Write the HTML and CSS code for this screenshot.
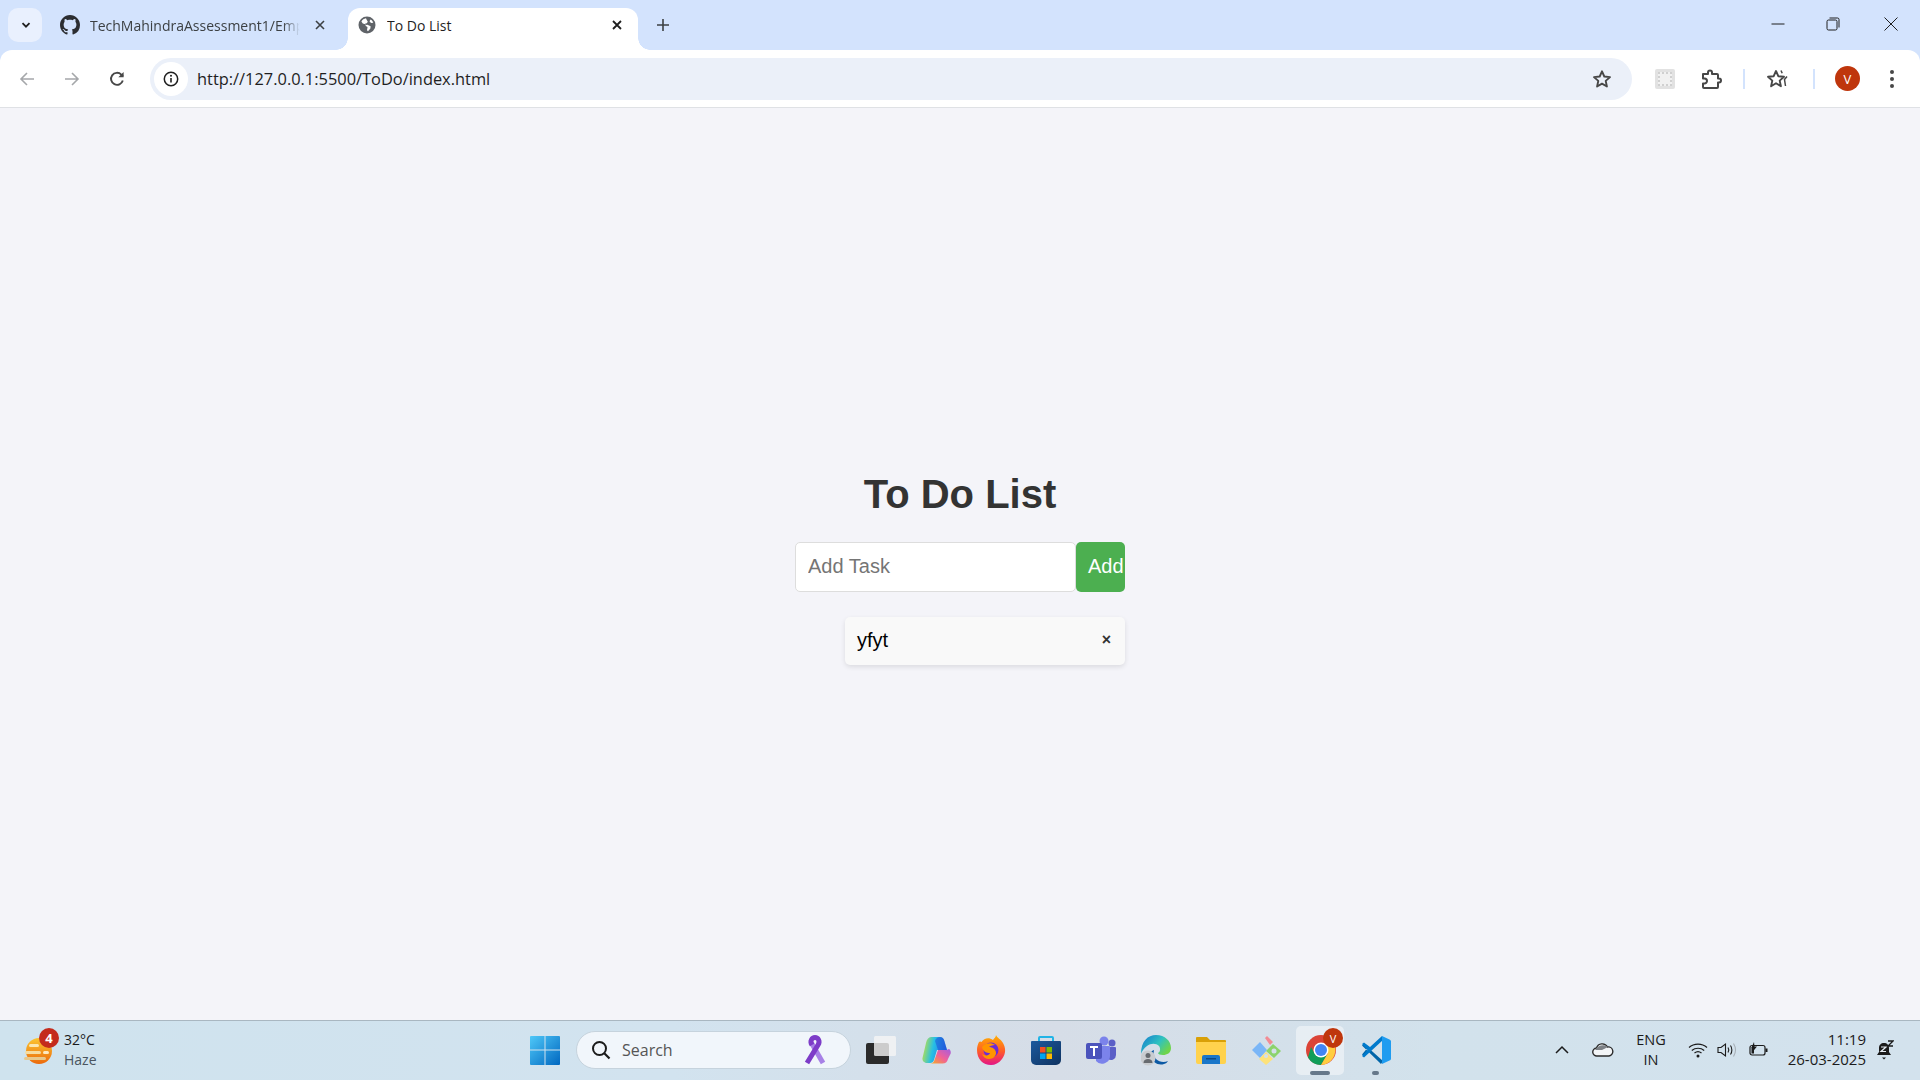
FILE: index.html
```html
<!DOCTYPE html>
<html lang="en">
<head>
<meta charset="utf-8">
<title>To Do List</title>
<link rel="stylesheet" href="styles.css">
</head>
<body>
<header class="browser">
  <div class="tabstrip">
    <div class="tab-menu">
      <svg width="12" height="12" viewBox="0 0 12 12"><path d="M2.5 4.2 6 7.7l3.5-3.5" fill="none" stroke="#1f1f1f" stroke-width="1.8"/></svg>
    </div>
    <div class="tab tab-idle">
      <svg class="fav-gh" width="20" height="20" viewBox="0 0 16 16"><path fill="#2b2d31" d="M8 0C3.58 0 0 3.58 0 8c0 3.54 2.29 6.53 5.47 7.59.4.07.55-.17.55-.38 0-.19-.01-.82-.01-1.49-2.01.37-2.53-.49-2.69-.94-.09-.23-.48-.94-.82-1.13-.28-.15-.68-.52-.01-.53.63-.01 1.08.58 1.23.82.72 1.21 1.87.87 2.33.66.07-.52.28-.87.51-1.07-1.78-.2-3.64-.89-3.64-3.95 0-.87.31-1.59.82-2.15-.08-.2-.36-1.02.08-2.12 0 0 .67-.21 2.2.82.64-.18 1.32-.27 2-.27s1.36.09 2 .27c1.53-1.04 2.2-.82 2.2-.82.44 1.1.16 1.92.08 2.12.51.56.82 1.27.82 2.15 0 3.07-1.87 3.75-3.65 3.95.29.25.54.73.54 1.48 0 1.07-.01 1.93-.01 2.2 0 .21.15.46.55.38A8.01 8.01 0 0 0 16 8c0-4.42-3.58-8-8-8z"/></svg>
      <span class="tab-title tab-title-fade">TechMahindraAssessment1/Emp</span>
      <svg class="tab-x" width="12" height="12" viewBox="0 0 12 12"><path d="M2 2l8 8M10 2l-8 8" stroke="#3c4043" stroke-width="1.6"/></svg>
    </div>
    <div class="tab tab-active">
      <svg class="fav-globe" width="18" height="18" viewBox="0 0 18 18"><circle cx="9" cy="9" r="8.5" fill="#5f6368"/><path fill="#fff" d="M8 2.2c-2 .3-3.6 1.500-4.600 3.200l1.400 2 2.600.8.300 1.800 1.800 1-.500 3.300 1 .900 2.400-2.600.200-2.300-3.200-1.500-1.500.200-.700-1.400 1.600-.300 1-1.500-1.300-2.300zM12.500 3.500l-1 1.800 1.500 1.700 2.300-.300c-.500-1.400-1.500-2.500-2.800-3.200z"/></svg>
      <span class="tab-title tab-title-on">To Do List</span>
      <svg class="tab-x" width="12" height="12" viewBox="0 0 12 12"><path d="M2 2l8 8M10 2l-8 8" stroke="#1f1f1f" stroke-width="1.8"/></svg>
    </div>
    <svg class="newtab" width="14" height="14" viewBox="0 0 14 14"><path d="M7 1v12M1 7h12" stroke="#3c4043" stroke-width="1.6"/></svg>
    <div class="winctl">
      <svg width="14" height="14" viewBox="0 0 14 14"><path d="M0.500 7h13" stroke="#1f1f1f" stroke-width="1"/></svg>
      <svg width="14" height="14" viewBox="0 0 14 14"><rect x="1" y="3" width="10" height="10" rx="1.500" fill="none" stroke="#1f1f1f"/><path d="M3.500 1h8a1.500 1.500 0 0 1 1.500 1.500v8" fill="none" stroke="#1f1f1f" stroke-width="1"/></svg>
      <svg width="14" height="14" viewBox="0 0 14 14"><path d="M.5.5l13 13M13.500.5l-13 13" stroke="#1f1f1f" stroke-width="1"/></svg>
    </div>
  </div>
  <div class="toolbar">
    <svg class="nav nav-back" width="16" height="16" viewBox="0 0 16 16"><path d="M15 8H2M8 2 2 8l6 6" fill="none" stroke="#a5a7aa" stroke-width="1.600"/></svg>
    <svg class="nav nav-fwd" width="16" height="16" viewBox="0 0 16 16"><path d="M1 8h13M8 2l6 6-6 6" fill="none" stroke="#a5a7aa" stroke-width="1.600"/></svg>
    <svg class="nav nav-reload" width="16" height="16" viewBox="0 0 16 16"><path d="M13.800 9.500A6 6 0 1 1 12.300 3.600L14 5.300" fill="none" stroke="#474747" stroke-width="1.900"/><path d="M14.600 1v5.300H9.300z" fill="#474747"/></svg>
    <div class="omnibox">
      <div class="site-info">
        <svg width="16" height="16" viewBox="0 0 16 16"><circle cx="8" cy="8" r="6.700" fill="none" stroke="#1f1f1f" stroke-width="1.500"/><path d="M8 7v4.500" stroke="#1f1f1f" stroke-width="1.600"/><circle cx="8" cy="4.800" r="1" fill="#1f1f1f"/></svg>
      </div>
      <span class="url">http://127.0.0.1:5500/ToDo/index.html</span>
      <svg class="omni-star" width="20" height="20" viewBox="0 0 20 20"><path d="M10 2.300l2.300 5.200 5.700.6-4.300 3.800 1.200 5.600-4.900-2.900-4.900 2.900 1.200-5.600L2 8.100l5.700-.6z" fill="none" stroke="#474747" stroke-width="1.900" stroke-linejoin="round"/></svg>
    </div>
    <div class="ext-thumb"><span></span></div>
    <svg class="puzzle" width="22" height="22" viewBox="0 0 22 22"><path d="M3 6h5V4.500a2 2 0 0 1 4 0V6h5a1 1 0 0 1 1 1v3.500h1a2 2 0 0 1 0 4h-1V19a1 1 0 0 1-1 1H4a1 1 0 0 1-1-1v-3.500h1.500a2.500 2.500 0 0 0 0-5H3z" fill="none" stroke="#474747" stroke-width="2" stroke-linejoin="round"/></svg>
    <i class="tool-sep sep-a"></i>
    <svg class="star-list" width="24" height="22" viewBox="0 0 24 22"><path d="M10 3l2.300 5.200 5.700.6-4.300 3.800 1.200 5.600-4.900-2.900-4.900 2.900L6.300 12.600 2 8.800l5.700-.6z" fill="none" stroke="#474747" stroke-width="1.900" stroke-linejoin="round"/><path d="M15 2.500l1.200 2.800M21 8.500l-2.500 3 1 6.500" fill="none" stroke="#474747" stroke-width="1.500"/></svg>
    <i class="tool-sep sep-b"></i>
    <div class="avatar">V</div>
    <svg class="kebab" width="6" height="20" viewBox="0 0 6 20"><circle cx="3" cy="3" r="2" fill="#474747"/><circle cx="3" cy="10" r="2" fill="#474747"/><circle cx="3" cy="17" r="2" fill="#474747"/></svg>
  </div>
</header>

<main class="page">
  <section class="todo">
    <h1 class="todo-title">To Do List</h1>
    <div class="todo-form">
      <input class="todo-input" type="text" placeholder="Add Task">
      <button class="todo-add" type="button">Add</button>
    </div>
    <ul class="todo-list">
      <li class="todo-item"><span>yfyt</span><button class="todo-del" type="button">×</button></li>
    </ul>
  </section>
</main>

<footer class="taskbar">
  <div class="weather">
    <svg class="weather-icon" width="30" height="30" viewBox="0 0 30 30">
      <defs><linearGradient id="sun" x1="0" y1="0" x2="0" y2="1"><stop offset="0" stop-color="#fbc531"/><stop offset="1" stop-color="#ec6a0c"/></linearGradient></defs>
      <circle cx="15" cy="15" r="13" fill="url(#sun)"/>
      <rect x="5" y="8" width="10" height="3" rx="1.500" fill="#fbe7b0"/>
      <rect x="1" y="15" width="16" height="3" rx="1.500" fill="#f6dca0"/>
      <rect x="19" y="15" width="6" height="3" rx="1.500" fill="#fde9c0"/>
      <rect x="0" y="21" width="22" height="3" rx="1.500" fill="#e8c88c"/>
    </svg>
    <span class="weather-badge">4</span>
    <div class="weather-text"><span class="temp">32°C</span><span class="cond">Haze</span></div>
  </div>
  <div class="tb-center">
    <svg class="start" width="30" height="30" viewBox="0 0 30 30">
      <defs><linearGradient id="win" x1="0" y1="0" x2="1" y2="1"><stop offset="0" stop-color="#4fc8f8"/><stop offset="1" stop-color="#0067c0"/></linearGradient></defs>
      <path fill="url(#win)" d="M1 1h13.500v13.500H0V2a1 1 0 0 1 1-1zM15.500 1H29a1 1 0 0 1 1 1v12.500H15.500zM0 15.500h14.500V30H1a1 1 0 0 1-1-1zM15.500 15.500H30V29a1 1 0 0 1-1 1H15.500z"/>
    </svg>
    <div class="searchbox">
      <svg width="20" height="20" viewBox="0 0 20 20"><circle cx="8.500" cy="8.500" r="6.500" fill="none" stroke="#1b1b1b" stroke-width="2"/><path d="M13.300 13.300 18.500 18.500" stroke="#1b1b1b" stroke-width="2.200"/></svg>
      <span class="search-label">Search</span>
      <svg class="ribbon" width="22" height="30" viewBox="0 0 22 30"><path d="M7.500 8 19 28" fill="none" stroke="#a781e6" stroke-width="5"/><path d="M3 28 14 10C16.500 6 14 2.500 11 2.500S5.500 6 8 10" fill="none" stroke="#7d3cc8" stroke-width="5"/></svg>
    </div>
    <div class="slot slot-view">
      <svg width="30" height="30" viewBox="0 0 30 30"><rect x="0" y="8" width="23" height="21" rx="2" fill="#2b2b2b"/><rect x="8" y="1" width="22" height="20" rx="1.500" fill="#f5f5f5" fill-opacity=".8"/></svg>
    </div>
    <div class="slot">
      <svg width="30" height="28" viewBox="0 0 30 28">
        <defs><linearGradient id="cpA" x1="0" y1="0.500" x2="1" y2="0.700"><stop offset="0" stop-color="#b4e04e"/><stop offset=".4" stop-color="#27bfe6"/><stop offset="1" stop-color="#2466e0"/></linearGradient><linearGradient id="cpB" x1="0" y1="1" x2="1" y2="0"><stop offset="0" stop-color="#f6b020"/><stop offset=".5" stop-color="#f0609a"/><stop offset="1" stop-color="#a35de0"/></linearGradient></defs>
        <path fill="url(#cpA)" d="M10 1h9c2.500 0 3.500 1.200 4.200 3.500L26 14H16l-3 10c-.6 2-2 3-4 3H6c-3 0-5-2.500-4.500-5L5 7c.8-3.500 2.500-6 5-6z"/>
        <path fill="url(#cpB)" d="M17 14h8.500l2.500-1c1.500 1 2 2.500 1.700 4.500L27 23c-.8 3-2.500 4.500-5.500 4.500H9c2.300 0 3.700-1.200 4.300-3z"/>
        <path fill="#1d3fd8" d="M19 1c2.500 0 3.500 1.200 4.200 3.500L26 14h-9l-3-9c1-2.500 2.500-4 5-4z" fill-opacity=".45"/>
      </svg>
    </div>
    <div class="slot">
      <svg width="30" height="30" viewBox="0 0 30 30">
        <defs><linearGradient id="ff" x1="0.500" y1="0" x2="0.500" y2="1"><stop offset="0" stop-color="#ffb000"/><stop offset=".55" stop-color="#ff5a2a"/><stop offset="1" stop-color="#e31587"/></linearGradient></defs>
        <path fill="url(#ff)" d="M20 0c1 3 5 4 7 8 3 5 3 11-1 16-3 4-7 6-11 6C7 30 1 24 1 15c0-3 .8-6 2-8 1-1 2-.5 2.500 0C8 3 13 2 17 5c1-1.500 3-3 3-5z"/>
        <circle cx="15" cy="15" r="7.500" fill="#6a2bd9"/>
        <path fill="#ff9500" d="M6 12c3-4 9-5 13-2-3 0-5 1-6 2 3 0 7 2 7 6 0 3-3 6-7 6-3 0-6-2-7-5 3 2 7 2 8-1-3 0-7-1-8-6z"/>
      </svg>
    </div>
    <div class="slot">
      <svg width="30" height="30" viewBox="0 0 30 30">
        <defs><linearGradient id="st" x1="0" y1="0" x2="1" y2="1"><stop offset="0" stop-color="#1c5a9e"/><stop offset="1" stop-color="#0f3260"/></linearGradient></defs>
        <path d="M8 7V3a1 1 0 0 1 1-1h12a1 1 0 0 1 1 1v4" fill="none" stroke="#22b4e6" stroke-width="2"/>
        <path fill="url(#st)" d="M1 6h28a1 1 0 0 1 1 1v18a5 5 0 0 1-5 5H5a5 5 0 0 1-5-5V7a1 1 0 0 1 1-1z"/>
        <rect x="9" y="12" width="5.500" height="5.500" fill="#f25022"/><rect x="15.500" y="12" width="5.500" height="5.500" fill="#7fba00"/><rect x="9" y="18.500" width="5.500" height="5.500" fill="#00a4ef"/><rect x="15.500" y="18.500" width="5.500" height="5.500" fill="#ffb900"/>
      </svg>
    </div>
    <div class="slot">
      <svg width="30" height="28" viewBox="0 0 30 28">
        <circle cx="18" cy="5" r="4.500" fill="#7b83eb"/><circle cx="26" cy="7" r="3.500" fill="#5b5fc7"/>
        <path fill="#5b5fc7" d="M22 11h7a1 1 0 0 1 1 1v7a5 5 0 0 1-8 4z"/>
        <path fill="#7b83eb" d="M10 10h13a1 1 0 0 1 1 1v9a8 8 0 0 1-14 5z"/>
        <rect x="0" y="7" width="16" height="16" rx="2" fill="#4b53bc"/>
        <path d="M4 11h8M8 11v9" stroke="#fff" stroke-width="2"/>
      </svg>
    </div>
    <div class="slot">
      <svg width="30" height="31" viewBox="0 0 30 31">
        <defs><linearGradient id="edg" x1="0" y1="0" x2="1" y2="0.600"><stop offset="0" stop-color="#1378d0"/><stop offset=".6" stop-color="#30c2c0"/><stop offset="1" stop-color="#6fd44a"/></linearGradient></defs>
        <path fill="url(#edg)" d="M15 0c9 0 15 6 15 13 0 5-4 7-8 7-3 0-5-1-5-2 2-1 3-4 1-7-3-3-8-3-12 0-3 2-5 5-6 8C0 6 7 0 15 0z"/>
        <path fill="#0c59a4" d="M9 22c3 5 8 9 14 7 2-.5 3-1.500 4-3-4 2-9 1-12-2-2-2-3-6-2-9-3 1-5 4-4 7z"/>
        <circle cx="7" cy="23" r="7.500" fill="#c9ccd0"/><circle cx="7" cy="20.500" r="2.500" fill="#676b70"/><path d="M2.500 28c0-3 2-4 4.500-4s4.500 1 4.500 4z" fill="#676b70"/>
      </svg>
    </div>
    <div class="slot">
      <svg width="30" height="27" viewBox="0 0 30 27">
        <path fill="#d9a007" d="M1 0h10l3 3h15a1 1 0 0 1 1 1v6H0V1a1 1 0 0 1 1-1z"/>
        <path fill="#ffd24d" d="M0 5h30v20a2 2 0 0 1-2 2H2a2 2 0 0 1-2-2z"/>
        <path fill="#1976c9" d="M6 27v-7a2 2 0 0 1 2-2h14a2 2 0 0 1 2 2v7z"/>
        <rect x="10" y="21" width="10" height="1.500" fill="#0c4a86"/>
      </svg>
    </div>
    <div class="slot">
      <svg width="30" height="30" viewBox="0 0 30 30">
        <path fill="#7ab6f7" d="M9 7l7 8-7 8-8-8z"/>
        <path fill="#f28b94" d="M14 3l2-2 6 6-3 3z"/>
        <path fill="#8cd36b" d="M22 9l8 7-7 7-8-7z"/><circle cx="23" cy="16" r="2.500" fill="#d3e0ea"/>
        <path fill="#fde27a" d="M15 17l7 7-7 6-7-6z"/><circle cx="15" cy="21" r="2" fill="#d3e0ea"/>
      </svg>
    </div>
    <div class="slot slot-on">
      <svg width="30" height="30" viewBox="0 0 30 30">
        <circle cx="15" cy="15" r="15" fill="#db4437"/>
        <path fill="#0f9d58" d="M2 22.500A15 15 0 0 0 15 30l6-10-6 1-6-2-4-7-3 10.500z"/>
        <path fill="#ffcd40" d="M15 9h13.100A15 15 0 0 1 15 30l7-12V15a7 7 0 0 0-7-6z"/>
        <circle cx="15" cy="15" r="7.500" fill="#fff"/><circle cx="15" cy="15" r="6" fill="#4285f4"/>
      </svg>
      <span class="chrome-badge">V</span>
      <i class="run-pill"></i>
    </div>
    <div class="slot slot-code">
      <svg width="30" height="30" viewBox="0 0 30 30">
        <path fill="#0065a9" d="M1 10.500 3 9l19 17-2 3zM1 19.500 3 21l6-5-3-2.500z"/>
        <path fill="#007acc" d="M21 1 9 12 3 7.500 1 9l5.500 6L1 21l2 1.500L22 5z"/>
        <path fill="#1f9cf0" d="M21 1l7.500 3.500A2 2 0 0 1 30 6.300v17.400a2 2 0 0 1-1.500 1.800L21 29z"/>
      </svg>
      <i class="run-dot"></i>
    </div>
  </div>
  <div class="tray">
    <svg class="tray-chev" width="14" height="10" viewBox="0 0 14 10"><path d="M1 8l6-6 6 6" fill="none" stroke="#1b1b1b" stroke-width="1.500"/></svg>
    <svg class="tray-cloud" width="22" height="14" viewBox="0 0 22 14"><path d="M5 13a4 4 0 0 1-.500-8A6 6 0 0 1 15.500 4 4.500 4.500 0 0 1 17 13z" fill="#f3f5f7" stroke="#2b2b2b" stroke-width="1.400"/><path d="M3 7c3-5 9-6 13-3l-6 3z" fill="#7d8186"/></svg>
    <div class="lang"><span>ENG</span><span>IN</span></div>
    <svg class="tray-wifi" width="20" height="16" viewBox="0 0 20 16"><path d="M1 5.500c5-4.500 13-4.500 18 0M3.800 8.500c3.500-3 9-3 12.400 0M6.500 11c2-1.600 5-1.600 7 0" fill="none" stroke="#1b1b1b" stroke-width="1.200"/><circle cx="10" cy="14" r="1.500" fill="#1b1b1b"/></svg>
    <svg class="tray-vol" width="20" height="16" viewBox="0 0 20 16"><path d="M1 5.500h3L8.500 2v12L4 10.500H1z" fill="none" stroke="#1b1b1b" stroke-width="1.100"/><path d="M11 5.500c1 1.500 1 3.500 0 5M13.500 3.500c1.800 2.500 1.800 6.500 0 9" fill="none" stroke="#1b1b1b" stroke-width="1.100"/><path d="M16.500 1.500c2.500 4 2.500 9 0 13" fill="none" stroke="#a8b0b8" stroke-width="1.100"/></svg>
    <svg class="tray-batt" width="20" height="16" viewBox="0 0 20 16"><rect x="1" y="3.500" width="15" height="9.500" rx="2" fill="none" stroke="#1b1b1b" stroke-width="1.200"/><rect x="16.500" y="6.500" width="2" height="3.500" fill="#1b1b1b"/><path d="M5 0 2.500 5.500H5L3.500 10 8 4.500H5.500z" fill="#1b1b1b"/><rect x="2.500" y="5" width="2.500" height="6.500" fill="#1b1b1b"/></svg>
    <div class="clock"><span>11:19</span><span>26-03-2025</span></div>
    <svg class="tray-bell" width="18" height="20" viewBox="0 0 18 20"><path d="M8 3c-3 0-5 2-5 5v4l-2 3h14l-2-3V8c0-3-2-5-5-5z" fill="#1b1b1b"/><path d="M6 17.500h4L8 19.500z" fill="#1b1b1b"/><path d="M5 7h5l-5 4.500h5" fill="none" stroke="#e8eef3" stroke-width="1.200"/><path d="M12 1h5l-5 5h5" fill="none" stroke="#1b1b1b" stroke-width="1.300"/></svg>
  </div>
</footer>
</body>
</html>
```

FILE: styles.css
```css
* { box-sizing: border-box; }
html, body { height: 100%; }
body {
  margin: 0;
  height: 1080px;
  display: flex;
  flex-direction: column;
  overflow: hidden;
  font-family: "Open Sans", "Noto Sans", sans-serif;
  background: #f4f4f9;
}

/* browser chrome */
.browser { background: #d3e3fd; flex: none; }
.tabstrip { height: 50px; display: flex; align-items: flex-end; padding-left: 8px; }
.tab-menu {
  width: 34px; height: 34px; margin-bottom: 8px; padding-left: 1px;
  background: #e9f0fe; border-radius: 10px;
  display: flex; align-items: center; justify-content: center;
}
.tab { height: 42px; display: flex; align-items: center; font-size: 14px; color: #3c4043; }
.tab-idle { width: 298px; padding: 0 14px 8px 18px; margin-right: 8px; }
.fav-gh { margin-right: 10px; flex: none; }
.tab-title { white-space: nowrap; overflow: hidden; }
.tab-title-fade {
  width: 210px;
  -webkit-mask-image: linear-gradient(to right, #000 92%, transparent);
  mask-image: linear-gradient(to right, #000 92%, transparent);
}
.tab-x { flex: none; margin-left: auto; }
.tab-active {
  position: relative; width: 290px; padding: 0 15px 8px 10px;
  background: #fff; border-radius: 12px 12px 0 0; color: #1f1f1f;
}
.tab-active::before, .tab-active::after {
  content: ""; position: absolute; bottom: 0; width: 12px; height: 12px;
}
.tab-active::before { left: -12px; background: radial-gradient(circle at 0 0, transparent 11.5px, #fff 12px); }
.tab-active::after { right: -12px; background: radial-gradient(circle at 100% 0, transparent 11.5px, #fff 12px); }
.fav-globe { margin-right: 11px; flex: none; }
.tab-title-on { flex: none; }
.newtab { align-self: flex-start; margin: 18px 0 0 18px; }
.winctl {
  margin-left: auto; align-self: flex-start; display: flex; gap: 41px;
  padding: 17px 22px 0 0;
}
.winctl svg:nth-child(2) { margin-right: 3px; }

.toolbar {
  height: 58px; background: #fff; border-bottom: 1px solid #dfe1e5;
  border-radius: 12px 12px 0 0;
  display: flex; align-items: center; padding: 0 0 0 19px;
}
.nav { flex: none; }
.nav-fwd { margin-left: 29px; }
.nav-reload { margin-left: 29px; }
.omnibox {
  width: 1482px; height: 42px; margin-left: 25px;
  background: #ebf0f9; border-radius: 21px;
  display: flex; align-items: center; padding: 0 20px 0 4px;
}
.site-info {
  width: 34px; height: 34px; border-radius: 50%; background: #fff;
  display: flex; align-items: center; justify-content: center;
}
.url { margin-left: 9px; font-size: 16.4px; color: #1f1f1f; white-space: nowrap; }
.omni-star { margin-left: auto; }
.ext-thumb {
  width: 20px; height: 20px; margin-left: 23px; background: #e2e2e2; border-radius: 2px;
  display: flex; align-items: center; justify-content: center;
}
.ext-thumb span { width: 14px; height: 14px; background: #f1f1f1; border: 2px dotted #d0d0d0; }
.puzzle { margin-left: 25px; }
.tool-sep { width: 2px; height: 20px; background: #d3e3fd; flex: none; }
.sep-a { margin-left: 21px; }
.star-list { margin: 0 0 0 21px; }
.sep-b { margin-left: 23px; }
.avatar {
  width: 25px; height: 25px; margin-left: 20px; border-radius: 50%;
  background: #bf360c; color: #fff; font-size: 13px;
  display: flex; align-items: center; justify-content: center;
}
.kebab { margin-left: 29px; }

/* page */
.page {
  flex: 1; min-height: 0;
  display: flex; align-items: center; justify-content: center;
  background: #f4f4f9;
  font-family: "Liberation Sans", Arial, sans-serif;
}
.todo { width: 330px; }
.todo-title {
  margin: 29px 0 25px; text-align: center;
  font-size: 40px; font-weight: 700; line-height: 46px; color: #333;
}
.todo-form { display: flex; height: 50px; }
.todo-input {
  width: 281px; height: 50px; padding: 0 12px 2px;
  font: 20px "Liberation Sans", Arial, sans-serif;
  background: #fff; border: 1px solid #ddd; border-radius: 5px; outline: none;
}
.todo-input::placeholder { color: #757575; }
.todo-add {
  width: 49px; height: 50px; padding: 0 0 2px 12px; text-align: left;
  font: 20px "Liberation Sans", Arial, sans-serif; color: #fff;
  background: #4caf50; border: 0; border-radius: 5px; white-space: nowrap;
}
.todo-list { list-style: none; margin: 25px 0 21px; padding: 0 0 0 50px; }
.todo-item {
  height: 48px; padding: 0 14px 2px 12px; display: flex; align-items: center; justify-content: space-between;
  font-size: 20px; color: #000; background: #f9f9f9; border-radius: 5px;
  box-shadow: 0 2px 5px rgba(0, 0, 0, .1);
}
.todo-del {
  padding: 0; border: 0; background: none; color: #333;
  font: 700 16px "Liberation Sans", Arial, sans-serif;
}

/* taskbar */
.taskbar {
  flex: none; height: 60px; display: flex; align-items: center; position: relative;
  border-top: 1px solid #a9b7c1;
  background: linear-gradient(90deg, #cfe3ee 0%, #d2e3ef 35%, #d6dde7 55%, #d2e2ec 75%, #d3e2ed 100%);
  color: #1b1b1b;
}
.weather { position: relative; width: 505px; flex: none; display: flex; align-items: center; padding-left: 24px; height: 100%; }
.weather-icon { flex: none; margin-top: 0; }
.weather-badge {
  position: absolute; left: 39px; top: 7px; width: 20px; height: 20px; border-radius: 50%;
  background: #c42b1c; color: #fff; font: 700 13px "Open Sans", sans-serif;
  display: flex; align-items: center; justify-content: center;
}
.weather-text { display: flex; flex-direction: column; margin: 0 0 2px 10px; font-size: 14px; line-height: 20px; }
.cond { color: #4a5560; }
.tb-center { display: flex; align-items: center; height: 100%; width: 893px; flex: none; padding-bottom: 1px; }
.start { margin-left: 25px; flex: none; }
.searchbox {
  width: 275px; height: 38px; margin-left: 16px; padding: 0 24px 0 14px;
  display: flex; align-items: center; border-radius: 19px;
  background: #f1f6fb; border: 1px solid #c6d3dd; flex: none;
}
.search-label { margin-left: 11px; font-size: 16px; color: #555; }
.ribbon { margin-left: auto; }
.slot {
  position: relative; width: 55px; height: 100%; flex: none;
  display: flex; align-items: center; justify-content: center;
}
.slot-view { margin-left: 2px; }
.slot-on::before {
  content: ""; position: absolute; left: 3px; right: 4px; top: 5px; bottom: 4px;
  background: rgba(255, 255, 255, .45); border-radius: 5px;
}
.slot-on svg { position: relative; }
.chrome-badge {
  position: absolute; left: 30px; top: 7px; width: 20px; height: 20px; border-radius: 50%;
  background: #bf360c; color: #fff; font-size: 11px;
  display: flex; align-items: center; justify-content: center;
}
.run-pill { position: absolute; left: 17px; bottom: 4px; width: 20px; height: 4px; border-radius: 2px; background: #66788a; }
.run-dot { position: absolute; left: 24px; bottom: 4px; width: 7px; height: 4px; border-radius: 2px; background: #66788a; }
.tray { flex: 1; display: flex; align-items: center; height: 100%; padding: 0 0 1px 157px; }
.tray-cloud { margin-left: 23px; }
.lang { display: flex; flex-direction: column; align-items: center; width: 40px; margin: 0 0 0 17px; font-size: 14.5px; line-height: 20px; }
.tray-wifi { margin-left: 17px; }
.tray-vol { margin-left: 9px; }
.tray-batt { margin-left: 12px; }
.clock { display: flex; flex-direction: column; align-items: flex-end; width: 90px; margin: 0 0 3px 7px; font-size: 15px; line-height: 20px; }
.tray-bell { margin-left: 10px; }
```
